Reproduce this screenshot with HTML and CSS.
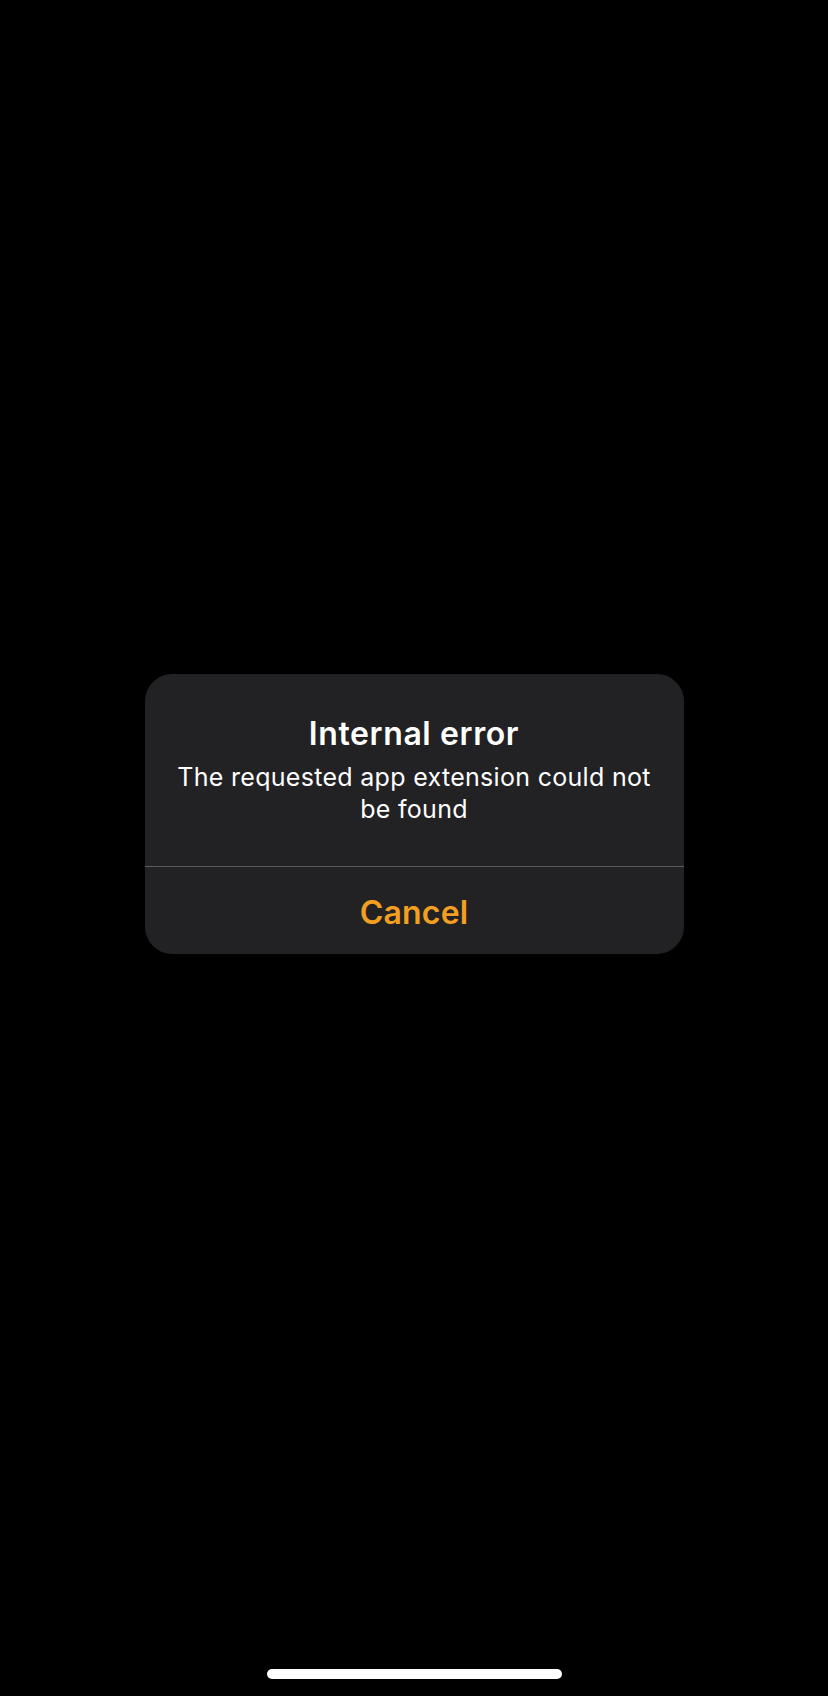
FILE: index.html
```html
<!DOCTYPE html>
<html lang="en">
<head>
<meta charset="utf-8">
<title>Internal error</title>
<link rel="stylesheet" href="styles.css">
</head>
<body>
<div class="screen">
  <div class="overlay">
    <div class="alert" role="alertdialog">
      <div class="alert-body">
        <div class="alert-title">Internal error</div>
        <div class="alert-message">The requested app extension could not be found</div>
      </div>
      <div class="alert-actions">
        <button class="alert-button">Cancel</button>
      </div>
    </div>
  </div>
  <div class="home-indicator"></div>
</div>
</body>
</html>
```
FILE: styles.css
```css
html, body {
  margin: 0;
  padding: 0;
  background: #000;
}
.screen {
  width: 828px;
  height: 1696px;
  display: flex;
  flex-direction: column;
  align-items: center;
  font-family: Inter, "Noto Sans", sans-serif;
  color: #fff;
}
.overlay {
  flex: 1;
  display: flex;
  justify-content: center;
  padding-top: 674px;
}
.alert {
  width: 539px;
  height: 280px;
  background: #222124;
  border-radius: 27px;
  display: flex;
  flex-direction: column;
  overflow: hidden;
}
.alert-body {
  height: 193px;
  box-sizing: border-box;
  padding: 41px 20px 0;
  text-align: center;
  border-bottom: 1px solid #5b5a5e;
}
.alert-title {
  font-size: 32px;
  font-weight: 600;
  line-height: 38px;
  letter-spacing: 0.6px;
}
.alert-message {
  margin-top: 8px;
  font-size: 25px;
  line-height: 32px;
  font-weight: 400;
  letter-spacing: 0.3px;
}
.alert-actions {
  flex: 1;
  display: flex;
}
.alert-button {
  flex: 1;
  background: none;
  border: 0;
  padding: 3px 0 0;
  font-family: inherit;
  font-size: 32px;
  font-weight: 600;
  color: #f29f21;
  letter-spacing: 0.2px;
}
.home-indicator {
  width: 295px;
  height: 10px;
  border-radius: 5px;
  background: #fff;
  margin-bottom: 17px;
}
```
